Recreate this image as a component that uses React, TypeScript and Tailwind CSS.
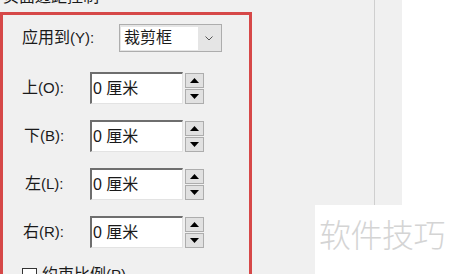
import React from "react";

const rows = [
  { label: "上", key: "(O):", ml: "ml-0" },
  { label: "下", key: "(B):", ml: "ml-[2px]" },
  { label: "左", key: "(L):", ml: "ml-[3px]" },
  { label: "右", key: "(R):", ml: "ml-[1px]" },
];

const font = { fontFamily: '"Liberation Sans", "Noto Sans CJK SC", sans-serif' };

function Arrow({ down }: { down?: boolean }) {
  return (
    <svg width="9" height="5" viewBox="0 0 9 5">
      {down ? (
        <polygon points="0,0 9,0 4.5,5" fill="#000" />
      ) : (
        <polygon points="0,5 9,5 4.5,0" fill="#000" />
      )}
    </svg>
  );
}

function Spin() {
  return (
    <div className="flex flex-col gap-[1px] ml-[2px] mt-[1px]">
      <div className="w-[19px] h-[15px] border border-[#adadad] bg-[#e1e1e1] flex items-center justify-center">
        <Arrow />
      </div>
      <div className="w-[19px] h-[15px] border border-[#adadad] bg-[#e1e1e1] flex items-center justify-center">
        <Arrow down />
      </div>
    </div>
  );
}

export default function App() {
  return (
    <div
      className="w-[450px] h-[274px] bg-[#f0f0f0] relative overflow-hidden flex text-[#1a1a1a]"
      style={font}
    >
      {/* left: page margin panel */}
      <div className="w-[374px] shrink-0">
        <div className="h-[12px] flex flex-col">
          <div className="-mt-[13px] pl-[3px] text-[16px] leading-[20px]">页面边距控制</div>
        </div>
        <div className="w-[252px] h-[300px] border-[3px] border-[#d64848] pt-[9px]">
          <div className="flex items-center pl-[19px]">
            <div className="w-[97px] text-[16px] leading-[20px]">
              应用到<span className="text-[15px]">(Y):</span>
            </div>
            <div className="w-[103px] h-[28px] border border-[#adadad] bg-[#e5e5e5] flex items-center p-[1px]">
              <div className="w-[77px] h-[23px] bg-white flex items-center pl-[3px] text-[16px]">
                裁剪框
              </div>
              <div className="flex-1 flex items-center justify-center">
                <svg width="8" height="5" viewBox="0 0 8 5">
                  <polyline points="0.5,0.5 4,4 7.5,0.5" fill="none" stroke="#555" strokeWidth="1" />
                </svg>
              </div>
            </div>
          </div>

          <div className="flex flex-col gap-[16px] mt-[20px]">
            {rows.map((r) => (
              <div key={r.key} className="flex items-start pl-[19px] h-[32px]">
                <div className="w-[68px] h-[32px] flex items-center text-[16px] leading-[20px]">
                  <span className={r.ml}>
                    {r.label}
                    <span className="text-[15px]">{r.key}</span>
                  </span>
                </div>
                <div className="w-[93px] h-[32px] bg-white border-t-2 border-l-2 border-t-[#6e6e6e] border-l-[#6e6e6e] border-b border-r border-b-[#e3e3e3] border-r-[#e3e3e3] pl-[1px] pt-[5px] text-[16px] leading-[20px]">
                  0 厘米
                </div>
                <Spin />
              </div>
            ))}
          </div>

          <div className="flex items-start pl-[19px] mt-[20px]">
            <div className="w-[15px] h-[15px] border border-[#333] bg-white" />
            <div className="ml-[5px] -mt-[3px] text-[16px] leading-[20px]">
              约束比例<span className="text-[15px]">(P)</span>
            </div>
          </div>
        </div>
      </div>

      {/* divider and right side */}
      <div className="w-px h-[207px] bg-[#cfcfcf] shrink-0" />
      <div className="w-[27px] h-full bg-[#f0f0f0] shrink-0" />
      <div className="flex-1 h-full bg-white" />

      {/* watermark */}
      <div className="absolute left-[315px] top-[205px] w-[135px] h-[69px] bg-white pl-[4px] pt-[8px]">
        <div
          className="text-[32px] leading-[40px] text-[#d4d4d4] tracking-[-0.5px]"
          style={{ fontFamily: '"Noto Sans CJK SC", sans-serif', fontWeight: 300 }}
        >
          软件技巧
        </div>
      </div>
    </div>
  );
}
